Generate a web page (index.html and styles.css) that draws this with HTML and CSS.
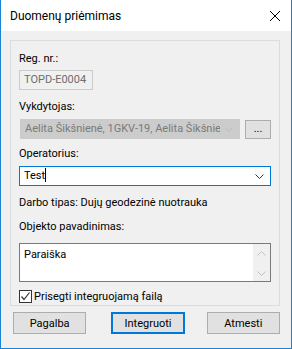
FILE: index.html
```html
<!DOCTYPE html>
<html lang="lt">
<head>
    <meta charset="UTF-8">
    <title>Duomenų priėmimas</title>
    <link rel="stylesheet" href="styles.css">
</head>
<body>
    <div class="window">
        <div class="titlebar">
            <span class="title">Duomenų priėmimas</span>
            <svg class="close" width="12" height="12" viewBox="0 0 12 12">
                <path d="M1 1 L11 11 M11 1 L1 11" stroke="#000" stroke-width="1" fill="none"/>
            </svg>
        </div>
        <div class="content">
            <div class="group">
                <div class="label first">Reg. nr.:</div>
                <div class="textbox disabled">TOPD-E0004</div>

                <div class="label">Vykdytojas:</div>
                <div class="row">
                    <div class="combo disabled">
                        <span class="combo-text">Aelita Šikšnienė, 1GKV-19, Aelita Šikšnienė</span>
                        <svg class="chevron" width="9" height="5" viewBox="0 0 9 5">
                            <path d="M0.5 0.5 L4.5 4.5 L8.5 0.5" stroke="#bcbcbc" fill="none"/>
                        </svg>
                    </div>
                    <div class="btn small">...</div>
                </div>

                <div class="label operator">Operatorius:</div>
                <div class="combo active">
                    <span class="combo-text">Test<span class="caret"></span></span>
                    <svg class="chevron" width="9" height="5" viewBox="0 0 9 5">
                        <path d="M0.5 0.5 L4.5 4.5 L8.5 0.5" stroke="#333" fill="none"/>
                    </svg>
                </div>

                <div class="label info">Darbo tipas: Dujų geodezinė nuotrauka</div>

                <div class="label">Objekto pavadinimas:</div>
                <div class="textarea">
                    <div class="textarea-text">Paraiška</div>
                    <div class="scrollbar">
                        <svg width="9" height="5" viewBox="0 0 9 5">
                            <path d="M0.5 4.5 L4.5 0.5 L8.5 4.5" stroke="#c0c0c0" fill="none"/>
                        </svg>
                        <svg width="9" height="5" viewBox="0 0 9 5">
                            <path d="M0.5 0.5 L4.5 4.5 L8.5 0.5" stroke="#c0c0c0" fill="none"/>
                        </svg>
                    </div>
                </div>

                <label class="check">
                    <span class="checkbox">
                        <svg width="11" height="11" viewBox="0 0 11 11">
                            <path d="M1.5 5.5 L4 8.5 L9.5 1.5" stroke="#333" stroke-width="1.2" fill="none"/>
                        </svg>
                    </span>
                    Prisegti integruojamą failą
                </label>
            </div>

            <div class="buttons">
                <div class="btn">Pagalba</div>
                <div class="btn default">Integruoti</div>
                <div class="btn">Atmesti</div>
            </div>
        </div>
    </div>
</body>
</html>
```
FILE: styles.css
```css
body {
    margin: 0;
    font-family: Roboto, 'Liberation Sans', sans-serif;
    font-size: 11px;
    color: #000;
    background: #f0f0f0;
}

.window {
    width: 292px;
    height: 349px;
    box-sizing: border-box;
    border: 1px solid #1883d7;
    border-top: none;
    background: #f0f0f0;
    display: flex;
    flex-direction: column;
}

.titlebar {
    height: 31px;
    background: #fff;
    display: flex;
    align-items: center;
    justify-content: space-between;
    padding: 0 10px 0 9px;
    flex-shrink: 0;
}

.title {
    font-size: 12px;
}

.content {
    padding: 9px 11px 0 9px;
}

.group {
    border: 1px solid #dcdcdc;
    padding: 0 8px 0 8px;
    height: 266px;
    box-sizing: border-box;
}

.label {
    line-height: 15px;
    margin-top: 9px;
    white-space: nowrap;
}

.label.first {
    margin-top: 10px;
}

.label.operator {
    margin-top: 7px;
}

.textbox {
    width: 74px;
    height: 20px;
    box-sizing: border-box;
    margin-top: 4px;
    border: 1px solid #cccccc;
    padding-left: 4px;
    line-height: 18px;
    white-space: nowrap;
    overflow: hidden;
    color: #6d6d6d;
}

.row {
    display: flex;
    align-items: center;
    gap: 5px;
    margin-top: 5px;
}

.combo {
    height: 20px;
    box-sizing: border-box;
    display: flex;
    align-items: center;
    padding: 0 6px 0 4px;
    gap: 4px;
}

.combo-text {
    flex: 1;
    white-space: nowrap;
    overflow: hidden;
    line-height: 18px;
}

.combo.disabled {
    width: 220px;
    margin-left: 1px;
    background: #cccccc;
    border: 1px solid #cccccc;
    color: #7a7a7a;
}

.combo.active {
    margin-top: 5px;
    background: #fff;
    border: 1px solid #0078d7;
}

.caret {
    display: inline-block;
    width: 1px;
    height: 14px;
    background: #000;
    vertical-align: -3px;
}

.info {
    margin-top: 9px;
}

.textarea {
    margin-top: 9px;
    height: 39px;
    box-sizing: border-box;
    border: 1px solid #7a7a7a;
    background: #fff;
    display: flex;
}

.textarea-text {
    flex: 1;
    padding: 3px 4px;
    line-height: 15px;
}

.scrollbar {
    width: 17px;
    background: #f0f0f0;
    display: flex;
    flex-direction: column;
    align-items: center;
    justify-content: space-between;
    padding: 7px 0 5px;
    box-sizing: border-box;
}

.check {
    display: flex;
    align-items: center;
    gap: 2px;
    margin-top: 7px;
    line-height: 15px;
}

.checkbox {
    width: 13px;
    height: 13px;
    box-sizing: border-box;
    border: 1px solid #333;
    background: #fff;
    display: flex;
    align-items: center;
    justify-content: center;
}

.buttons {
    display: flex;
    margin: 6px 0 0 3px;
}

.btn {
    width: 74px;
    height: 22px;
    box-sizing: border-box;
    background: #e1e1e1;
    border: 1px solid #adadad;
    display: flex;
    align-items: center;
    justify-content: center;
}

.btn.default {
    border: 2px solid #0078d7;
    margin: 0 22px 0 25px;
}

.btn.small {
    width: 27px;
    height: 19px;
    line-height: 10px;
}
```
